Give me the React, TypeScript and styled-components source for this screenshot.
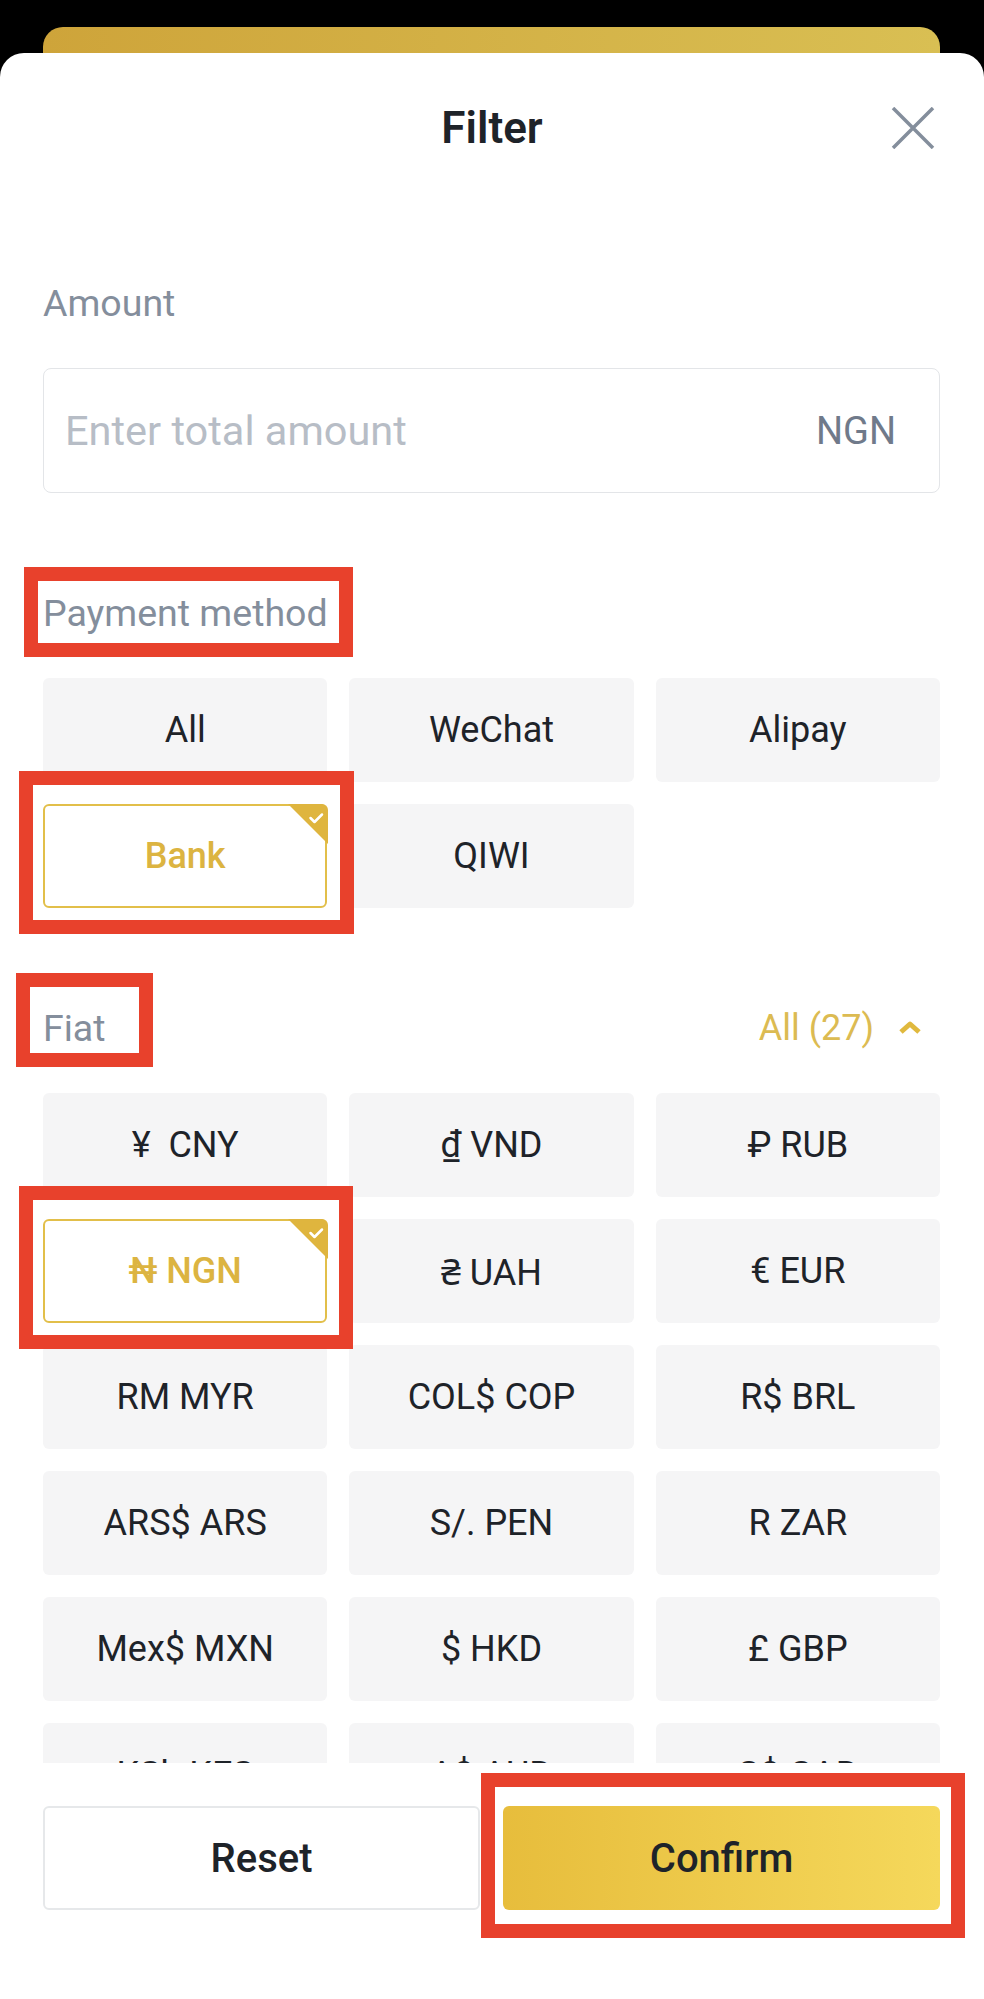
import React from "react";
import styled, { createGlobalStyle } from "styled-components";

const GlobalStyle = createGlobalStyle`
  html, body {
    margin: 0;
    padding: 0;
    background: #000;
  }
  body {
    font-family: Roboto, "Noto Sans", "DejaVu Sans", sans-serif;
  }
  * {
    box-sizing: border-box;
  }
`;

const payMethods = ["All", "WeChat", "Alipay", "Bank", "QIWI"];

const fiats = [
  "¥  CNY",
  "₫ VND",
  "₽ RUB",
  "₦ NGN",
  "₴ UAH",
  "€ EUR",
  "RM MYR",
  "COL$ COP",
  "R$ BRL",
  "ARS$ ARS",
  "S/. PEN",
  "R ZAR",
  "Mex$ MXN",
  "$ HKD",
  "£ GBP",
  "KSh KES",
  "A$ AUD",
  "C$ CAD",
  "₹ INR",
  "₺ TRY",
  "₩ KRW",
  "Rp IDR",
  "₱ PHP",
  "฿ THB",
  "$ USD",
  "₸ KZT",
  "GH₵ GHS",
];

const Screen = styled.div`
  width: 984px;
  height: 1999px;
  background: #000;
  padding-top: 27px;
  display: flex;
  flex-direction: column;
  overflow: hidden;
`;

const CardPeek = styled.div`
  flex: none;
  height: 26px;
  margin: 0 44px 0 43px;
  border-radius: 20px 20px 0 0;
  background: linear-gradient(90deg, #cea43a, #d9bf53);
`;

const Sheet = styled.div`
  flex: 1;
  min-height: 0;
  background: #fff;
  border-radius: 24px 24px 0 0;
  display: flex;
  flex-direction: column;
`;

const Header = styled.header`
  flex: none;
  display: grid;
  grid-template-columns: 1fr auto 1fr;
  align-items: center;
  padding: 49px 49px 0;
`;

const Title = styled.h1`
  grid-column: 2;
  margin: 0;
  font-size: 44px;
  line-height: 52px;
  font-weight: 600;
  color: #1e2329;
`;

const CloseButton = styled.button`
  justify-self: end;
  display: flex;
  padding: 0;
  border: none;
  background: none;
`;

const Body = styled.div`
  flex: 1;
  min-height: 0;
  overflow: hidden;
  padding: 127px 44px 0 43px;
`;

const Section = styled.section`
  & + & {
    margin-top: 98px;
  }
`;

const LabelRow = styled.div`
  display: flex;
  align-items: center;
  justify-content: space-between;
  margin-bottom: 43px;
`;

const Label = styled.span`
  position: relative;
  display: inline-block;
  font-size: 37.5px;
  line-height: 44px;
  color: #848e9c;
`;

const Toggle = styled.span`
  display: flex;
  align-items: center;
  gap: 24px;
  padding-right: 18px;
  font-size: 36px;
  line-height: 44px;
  color: #dcbb52;
`;

const Mark = styled.span<{ $t: number; $r: number; $b: number; $l: number }>`
  position: absolute;
  top: ${(p) => -p.$t}px;
  right: ${(p) => -p.$r}px;
  bottom: ${(p) => -p.$b}px;
  left: ${(p) => -p.$l}px;
  border: 14px solid #e8412c;
  pointer-events: none;
  z-index: 3;
`;

const InputBox = styled.label`
  display: flex;
  align-items: center;
  height: 125px;
  padding: 0 43px 0 21px;
  border: 1.5px solid #e3e5e8;
  border-radius: 8px;
`;

const AmountInput = styled.input`
  flex: 1;
  min-width: 0;
  border: none;
  outline: none;
  background: transparent;
  padding: 0;
  font-family: inherit;
  font-size: 41.5px;
  color: #1e2329;

  &::placeholder {
    color: #b7bdc6;
  }
`;

const Unit = styled.span`
  font-size: 38px;
  color: #707a8a;
`;

const ChipGrid = styled.div`
  display: grid;
  grid-template-columns: repeat(3, 1fr);
  column-gap: 22px;
  row-gap: 22px;
`;

const Chip = styled.button<{ $active?: boolean }>`
  position: relative;
  height: 104px;
  padding: 0;
  border-radius: 6px;
  border: 2.5px solid ${(p) => (p.$active ? "#e2bf4a" : "transparent")};
  background: ${(p) => (p.$active ? "#fff" : "#f5f5f6")};
  color: ${(p) => (p.$active ? "#dcb441" : "#1e2329")};
  font-family: inherit;
  font-size: 36px;
  font-weight: ${(p) => (p.$active ? 500 : 400)};
  white-space: pre;
`;

const Corner = styled.span`
  position: absolute;
  top: -2.5px;
  right: -2.5px;
  width: 40px;
  height: 40px;
  display: flex;
  border-top-right-radius: 6px;
  overflow: hidden;
`;

const Footer = styled.footer`
  flex: none;
  height: 236px;
  padding: 43px 44px 0 43px;
  display: grid;
  grid-template-columns: 1fr 1fr;
  column-gap: 23px;
  align-content: start;
`;

const FooterButton = styled.button<{ $primary?: boolean }>`
  position: relative;
  height: 104px;
  padding: 0;
  border-radius: 6px;
  border: ${(p) => (p.$primary ? "none" : "2px solid #e6e8ea")};
  background: ${(p) =>
    p.$primary ? "linear-gradient(90deg, #e7bd3c, #f5d85b)" : "#fff"};
  color: #1e2329;
  font-family: inherit;
  font-size: 40px;
  font-weight: 500;
`;

const CloseIcon = () => (
  <svg width="44" height="42" viewBox="0 0 44 42">
    <path
      d="M2 1 L42 41 M42 1 L2 41"
      stroke="#848e9c"
      strokeWidth="3.5"
      fill="none"
    />
  </svg>
);

const Chevron = () => (
  <svg width="24" height="14" viewBox="0 0 24 14">
    <path
      d="M3 11 L12 3 L21 11"
      stroke="#e0b93e"
      strokeWidth="5"
      strokeLinejoin="round"
      fill="none"
    />
  </svg>
);

const CheckCorner = () => (
  <Corner>
    <svg width="40" height="40" viewBox="0 0 40 40">
      <polygon points="0,0 40,0 40,40" fill="#dfb53e" />
      <path
        d="M22.5 14 L26.5 18 L34 10.5"
        stroke="#fff"
        strokeWidth="2.5"
        strokeLinecap="round"
        strokeLinejoin="round"
        fill="none"
      />
    </svg>
  </Corner>
);

const App: React.FC = () => {
  return (
    <Screen>
      <GlobalStyle />
      <CardPeek />
      <Sheet>
        <Header>
          <Title>Filter</Title>
          <CloseButton aria-label="Close">
            <CloseIcon />
          </CloseButton>
        </Header>

        <Body>
          <Section>
            <LabelRow>
              <Label>Amount</Label>
            </LabelRow>
            <InputBox>
              <AmountInput placeholder="Enter total amount" />
              <Unit>NGN</Unit>
            </InputBox>
          </Section>

          <Section>
            <LabelRow>
              <Label>
                Payment method
                <Mark $t={24} $r={25} $b={22} $l={19} />
              </Label>
            </LabelRow>
            <ChipGrid>
              {payMethods.map((method) => (
                <Chip key={method} $active={method === "Bank"}>
                  {method}
                  {method === "Bank" && (
                    <>
                      <CheckCorner />
                      <Mark $t={35} $r={29} $b={28} $l={26} />
                    </>
                  )}
                </Chip>
              ))}
            </ChipGrid>
          </Section>

          <Section>
            <LabelRow>
              <Label>
                Fiat
                <Mark $t={33} $r={47} $b={17} $l={27} />
              </Label>
              <Toggle>
                All (27)
                <Chevron />
              </Toggle>
            </LabelRow>
            <ChipGrid>
              {fiats.map((fiat) => (
                <Chip key={fiat} $active={fiat === "₦ NGN"}>
                  {fiat}
                  {fiat === "₦ NGN" && (
                    <>
                      <CheckCorner />
                      <Mark $t={35} $r={28} $b={28} $l={26} />
                    </>
                  )}
                </Chip>
              ))}
            </ChipGrid>
          </Section>
        </Body>

        <Footer>
          <FooterButton>Reset</FooterButton>
          <FooterButton $primary>
            Confirm
            <Mark $t={33} $r={25} $b={28} $l={22} />
          </FooterButton>
        </Footer>
      </Sheet>
    </Screen>
  );
};

export default App;
